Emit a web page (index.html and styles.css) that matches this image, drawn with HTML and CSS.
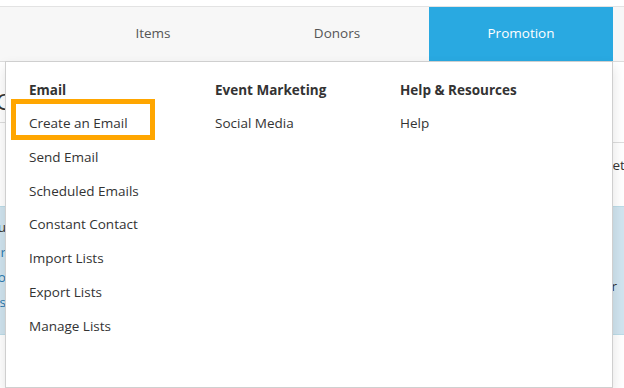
FILE: index.html
```html
<!DOCTYPE html>
<html lang="en">
<head>
  <meta charset="UTF-8">
  <meta name="viewport" content="width=device-width, initial-scale=1.0">
  <title>Promotion</title>
  <link rel="stylesheet" href="styles.css">
</head>
<body>
  <div class="header">
    <nav class="nav">
      <a class="tab" href="#">Items</a>
      <a class="tab" href="#">Donors</a>
      <a class="tab active" href="#">Promotion</a>
    </nav>

    <div class="menu">
      <div class="menu-col">
        <div class="menu-title">Email</div>
        <a class="menu-item highlight" href="#">Create an Email</a>
        <a class="menu-item" href="#">Send Email</a>
        <a class="menu-item" href="#">Scheduled Emails</a>
        <a class="menu-item" href="#">Constant Contact</a>
        <a class="menu-item" href="#">Import Lists</a>
        <a class="menu-item" href="#">Export Lists</a>
        <a class="menu-item" href="#">Manage Lists</a>
      </div>
      <div class="menu-col">
        <div class="menu-title">Event Marketing</div>
        <a class="menu-item" href="#">Social Media</a>
      </div>
      <div class="menu-col">
        <div class="menu-title">Help &amp; Resources</div>
        <a class="menu-item" href="#">Help</a>
      </div>
    </div>
  </div>

  <div class="page">
    <div class="page-top">
      <div class="page-left">
        <h1 class="page-title">Campaign</h1>
        <p class="page-text">Donation</p>
      </div>
      <div class="page-right">
        <p class="page-text">Competition</p>
      </div>
    </div>
    <div class="info">
      <p class="info-lead">You</p>
      <p class="info-link">Your</p>
      <p class="info-link">To</p>
      <p class="info-link">Emails</p>
      <span class="info-side">Register</span>
    </div>
  </div>
</body>
</html>
```

FILE: styles.css
```css
body {
  margin: 0;
  min-height: 100vh;
  font-family: "Open Sans", "Liberation Sans", sans-serif;
  font-size: 13.5px;
  color: #333;
  background-color: #fff;
  overflow: hidden;
}

.header {
  position: relative;
  padding-top: 6px;
}

.nav {
  display: flex;
  padding-left: 61px;
  height: 54px;
  background-color: #f7f7f7;
  border-top: 1px solid #e3e3e3;
  border-bottom: 1px solid #dcdcdc;
}

.nav .tab {
  width: 184px;
  display: flex;
  justify-content: center;
  align-items: center;
  padding-bottom: 2px;
  color: #555;
  text-decoration: none;
}

.nav .tab.active {
  background-color: #29a9e1;
  color: #fff;
}

.menu {
  position: absolute;
  top: 61px;
  left: 5px;
  z-index: 10;
  box-sizing: border-box;
  width: 608px;
  height: 327px;
  padding: 18px 0 0 23px;
  display: grid;
  grid-template-columns: 186px 185px 1fr;
  align-items: start;
  background-color: #fff;
  border: 1px solid #cfcfcf;
  box-shadow: 0 6px 12px rgba(0, 0, 0, 0.12);
}

.menu-col {
  display: flex;
  flex-direction: column;
}

.menu-title {
  font-weight: bold;
  line-height: 20px;
  padding-bottom: 7px;
}

.menu-item {
  position: relative;
  padding: 7px 0;
  line-height: 19.8px;
  color: #333;
  text-decoration: none;
}

.menu-item.highlight::after {
  content: "";
  position: absolute;
  top: -8px;
  left: -18px;
  width: 144px;
  height: 41px;
  box-sizing: border-box;
  border: 5px solid #ffa600;
}

.page {
  padding-top: 24px;
}

.page-top {
  display: grid;
  grid-template-columns: 300px 1fr;
  height: 120px;
}

.page-left {
  margin-left: -4px;
}

.page-title {
  margin: 0;
  font-size: 22px;
  font-weight: normal;
  line-height: 30px;
  padding-bottom: 6px;
  border-bottom: 1px solid #ddd;
}

.page-text {
  margin: 0;
  line-height: 20px;
}

.page-left .page-text {
  margin-top: 30px;
  margin-left: -54px;
}

.page-right {
  margin-top: 56px;
  padding-top: 12px;
  padding-left: 275px;
  border-top: 1px solid #ddd;
}

.info {
  position: relative;
  height: 129px;
  padding-top: 8px;
  box-sizing: border-box;
  background-color: #d0e4ef;
  border-top: 1px solid #bcdce8;
  border-bottom: 1px solid #bcdce8;
}

.info p {
  width: 100px;
  margin: 0 0 0 -94px;
  text-align: right;
  line-height: 25px;
}

.info-lead {
  color: #333;
}

.info-link {
  color: #2a7ab0;
}

.info-side {
  position: absolute;
  right: 7px;
  top: 70px;
  color: #333;
}
```
